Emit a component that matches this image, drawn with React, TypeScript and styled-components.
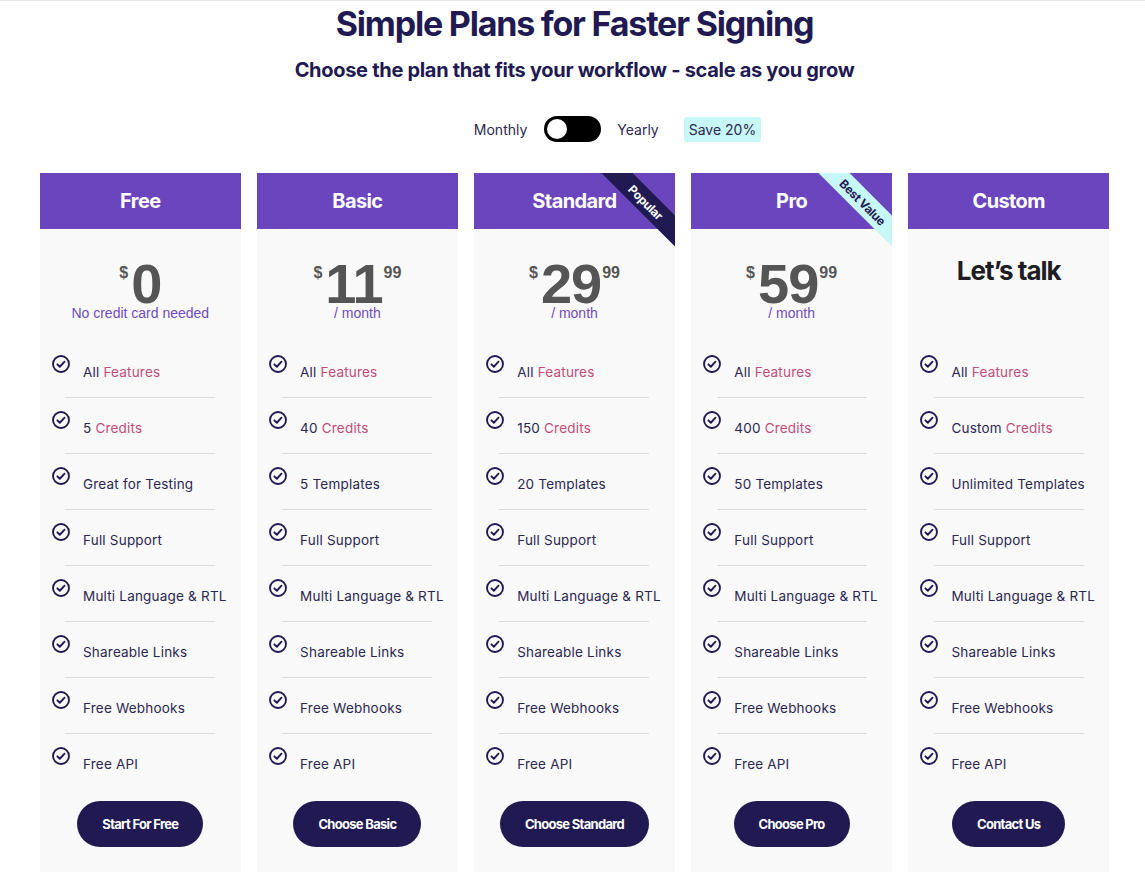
import styled, { createGlobalStyle } from 'styled-components';

const GlobalStyle = createGlobalStyle`
  html, body {
    margin: 0;
    padding: 0;
    background: #ffffff;
  }
  body {
    font-family: Inter, "Noto Sans", sans-serif;
    border-top: 1px solid #e6e6e6;
  }
`;

const Page = styled.main`
  padding: 3px 0 0 4px;
  display: flex;
  flex-direction: column;
  align-items: center;
`;

const Title = styled.h1`
  margin: 0;
  font-size: 34px;
  line-height: 40px;
  font-weight: 700;
  letter-spacing: -1.2px;
  color: #211a52;
`;

const Subtitle = styled.h2`
  margin: 12px 0 0;
  font-size: 20px;
  line-height: 28px;
  font-weight: 700;
  letter-spacing: -0.3px;
  color: #211a52;
`;

const ToggleRow = styled.div`
  display: flex;
  align-items: center;
  margin-top: 32px;
  padding-left: 86px;
  height: 26px;
`;

const ToggleLabel = styled.span`
  font-size: 14px;
  color: #2b2750;
`;

const Switch = styled.button`
  width: 57px;
  height: 26px;
  margin: 0 16px 0 17px;
  padding: 3px;
  border: none;
  border-radius: 13px;
  background: #000;
  display: flex;
  align-items: center;
  cursor: pointer;
`;

const Knob = styled.span`
  width: 20px;
  height: 20px;
  border-radius: 50%;
  background: #fff;
`;

const SaveBadge = styled.span`
  margin-left: 25px;
  padding: 0 5px;
  height: 25px;
  display: inline-flex;
  align-items: center;
  background: #c8f7f7;
  border-radius: 3px;
  font-size: 14px;
  color: #2b2750;
`;

const Grid = styled.div`
  margin-top: 31px;
  width: 1069px;
  display: grid;
  grid-template-columns: repeat(5, 1fr);
  gap: 16.5px;
  align-items: start;
`;

const Card = styled.section`
  position: relative;
  background: #f9f9f9;
  display: flex;
  flex-direction: column;
  overflow: hidden;
`;

const CardHead = styled.header`
  height: 56px;
  background: #6b45be;
  display: flex;
  align-items: center;
  justify-content: center;
  color: #fff;
  font-size: 20px;
  font-weight: 700;
  letter-spacing: -0.6px;
`;

const Ribbon = styled.div`
  position: absolute;
  top: 0;
  right: 0;
  width: 75px;
  height: 75px;
  overflow: hidden;
  pointer-events: none;
`;

const RibbonBand = styled.span<{ $light?: boolean }>`
  position: absolute;
  left: -8.75px;
  top: 17.75px;
  width: 110px;
  height: 22px;
  transform: rotate(45deg);
  background: ${({ $light }) => ($light ? '#c8f7f7' : '#211a52')};
  color: ${({ $light }) => ($light ? '#211a52' : '#ffffff')};
  font-size: 12px;
  font-weight: 700;
  letter-spacing: -0.3px;
  display: flex;
  align-items: center;
  justify-content: center;
`;

const PriceBlock = styled.div`
  height: 81px;
  margin-top: 32px;
  display: flex;
  flex-direction: column;
  align-items: center;
  font-family: "Liberation Sans", Arial, sans-serif;
`;

const PriceRow = styled.div`
  display: flex;
  align-items: flex-start;
  height: 48px;
  color: #555555;
  font-weight: 700;
`;

const Small = styled.span<{ $gap: 'left' | 'right' }>`
  font-size: 16px;
  line-height: 16px;
  margin-top: 4px;
  ${({ $gap }) => ($gap === 'right' ? 'margin-right: 3px;' : 'margin-left: 1px;')}
`;

const Amount = styled.span`
  font-size: 56px;
  line-height: 46px;
  letter-spacing: -1px;
`;

const Per = styled.span`
  font-size: 14px;
  line-height: 14px;
  margin-top: -3px;
  color: #6f4cc0;
`;

const TalkText = styled.span`
  font-family: Inter, "Noto Sans", sans-serif;
  font-size: 26px;
  line-height: 20px;
  font-weight: 700;
  letter-spacing: -1px;
  color: #1f1d24;
`;

const Features = styled.ul`
  list-style: none;
  margin: 0;
  padding: 0;
`;

const Feature = styled.li`
  display: flex;
  align-items: flex-start;
  gap: 13px;
  padding: 13px 0 15px 12px;
  font-size: 13.5px;
  line-height: 20px;
  color: #2b2750;
  letter-spacing: 0.2px;
`;

const FeatureText = styled.span`
  margin-top: 7px;
`;

const Accent = styled.span`
  color: #c24d7a;
`;

const Divider = styled.li`
  width: 150px;
  height: 1px;
  margin: 0 auto;
  background: #dcdcdc;
`;

const CheckIcon = styled.svg`
  width: 18px;
  height: 18px;
  flex: none;
`;

const Foot = styled.div`
  display: flex;
  justify-content: center;
  padding: 12px 0 25px;
`;

const CtaButton = styled.button`
  height: 46px;
  padding: 0 25px;
  border: none;
  border-radius: 23px;
  background: #211a52;
  color: #fff;
  font-family: Inter, "Noto Sans", sans-serif;
  font-size: 13px;
  font-weight: 700;
  letter-spacing: -0.7px;
  cursor: pointer;
`;

type Plan = {
  name: string;
  amount?: string;
  cents?: string;
  note: string;
  credits: string;
  templates: string;
  cta: string;
  ribbon?: { text: string; light?: boolean };
};

const plans: Plan[] = [
  { name: 'Free', amount: '0', note: 'No credit card needed', credits: '5', templates: 'Great for Testing', cta: 'Start For Free' },
  { name: 'Basic', amount: '11', cents: '99', note: '/ month', credits: '40', templates: '5 Templates', cta: 'Choose Basic' },
  { name: 'Standard', amount: '29', cents: '99', note: '/ month', credits: '150', templates: '20 Templates', cta: 'Choose Standard', ribbon: { text: 'Popular' } },
  { name: 'Pro', amount: '59', cents: '99', note: '/ month', credits: '400', templates: '50 Templates', cta: 'Choose Pro', ribbon: { text: 'Best Value', light: true } },
  { name: 'Custom', note: '', credits: 'Custom', templates: 'Unlimited Templates', cta: 'Contact Us' },
];

const sharedFeatures = ['Full Support', 'Multi Language & RTL', 'Shareable Links', 'Free Webhooks', 'Free API'];

function Check() {
  return (
    <CheckIcon viewBox="0.5 0.5 23 23" fill="none" stroke="#211a52" strokeWidth="2.4" strokeLinecap="round" strokeLinejoin="round">
      <circle cx="12" cy="12" r="10.2" />
      <path d="M7.4 12.4l3.1 3.1 6-6.4" />
    </CheckIcon>
  );
}

function PlanCard({ plan }: { plan: Plan }) {
  const items = [
    <>All <Accent>Features</Accent></>,
    <>{plan.credits} <Accent>Credits</Accent></>,
    <>{plan.templates}</>,
    ...sharedFeatures.map((f) => <>{f}</>),
  ];

  return (
    <Card>
      <CardHead>{plan.name}</CardHead>
      {plan.ribbon && (
        <Ribbon>
          <RibbonBand $light={plan.ribbon.light}>{plan.ribbon.text}</RibbonBand>
        </Ribbon>
      )}
      <PriceBlock>
        {plan.amount ? (
          <>
            <PriceRow>
              <Small $gap="right">$</Small>
              <Amount>{plan.amount}</Amount>
              {plan.cents && <Small $gap="left">{plan.cents}</Small>}
            </PriceRow>
            <Per>{plan.note}</Per>
          </>
        ) : (
          <TalkText>Let’s talk</TalkText>
        )}
      </PriceBlock>
      <Features>
        {items.map((content, i) => (
          <>
            {i > 0 && <Divider key={`d${i}`} aria-hidden />}
            <Feature key={i}>
              <Check />
              <FeatureText>{content}</FeatureText>
            </Feature>
          </>
        ))}
      </Features>
      <Foot>
        <CtaButton>{plan.cta}</CtaButton>
      </Foot>
    </Card>
  );
}

export default function App() {
  return (
    <>
      <GlobalStyle />
      <Page>
        <Title>Simple Plans for Faster Signing</Title>
        <Subtitle>Choose the plan that fits your workflow - scale as you grow</Subtitle>
        <ToggleRow>
          <ToggleLabel>Monthly</ToggleLabel>
          <Switch aria-label="Billing period">
            <Knob />
          </Switch>
          <ToggleLabel>Yearly</ToggleLabel>
          <SaveBadge>Save 20%</SaveBadge>
        </ToggleRow>
        <Grid>
          {plans.map((p) => (
            <PlanCard key={p.name} plan={p} />
          ))}
        </Grid>
      </Page>
    </>
  );
}
